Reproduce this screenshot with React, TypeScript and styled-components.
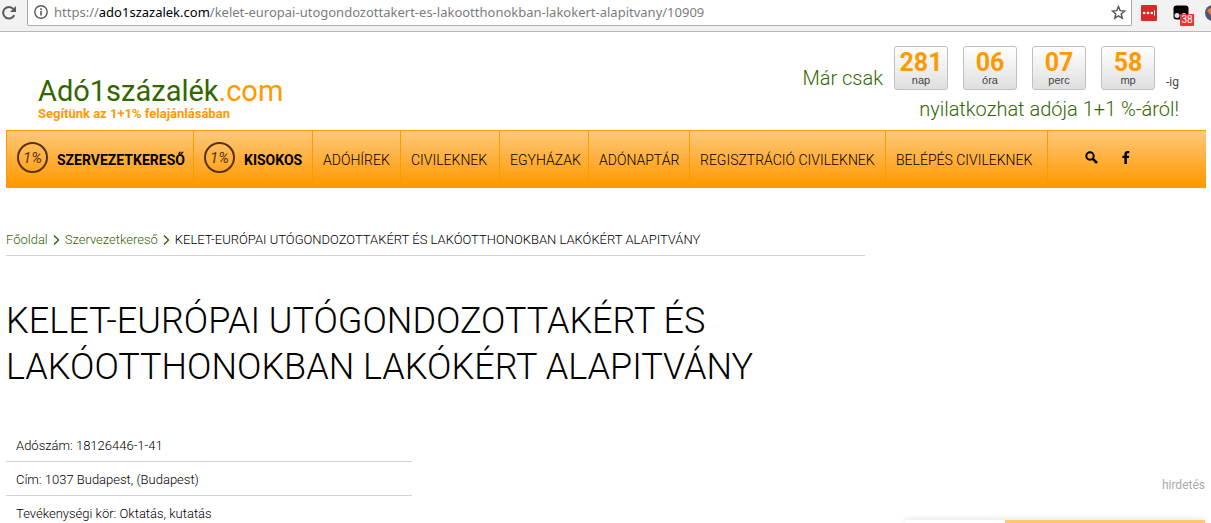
import React from "react";
import styled, { createGlobalStyle, css } from "styled-components";

const green = "#336600";
const orange = "#ff9900";

const GlobalStyle = createGlobalStyle`
  * { box-sizing: border-box; }
  body {
    margin: 0;
    background: #fff;
    color: #000;
    font-family: Roboto, "Liberation Sans", sans-serif;
    font-weight: 300;
  }
  a { color: inherit; text-decoration: none; }
`;

const BrowserBar = styled.div`
  display: flex;
  height: 32px;
  overflow: hidden;
  background: #f2f2f2;
  border-bottom: 1px solid #b8b8b8;
`;

const IconButton = styled.button`
  display: flex;
  align-items: center;
  justify-content: center;
  padding: 0;
  border: 0;
  background: none;
  color: inherit;
`;

const Reload = styled(IconButton)`
  width: 27px;
  height: 25px;
  padding-right: 9px;
`;

const Address = styled.div`
  display: flex;
  flex: 1;
  align-items: center;
  gap: 6px;
  height: 26px;
  padding: 0 5px 1px 6px;
  background: #fff;
  border: solid #a9a9a9;
  border-width: 0 1px 1px;
  border-bottom-left-radius: 2px;
  border-bottom-right-radius: 2px;
`;

const Url = styled.div`
  flex: 1;
  overflow: hidden;
  color: #7c7c7c;
  font: 400 13px/18px "Noto Sans", sans-serif;
  white-space: nowrap;
`;

const Host = styled.span`
  color: #000;
`;

const Extensions = styled.div`
  display: flex;
  flex: none;
  align-items: center;
  gap: 16px;
  width: 79px;
  height: 27px;
  padding: 0 0 2px 9px;
  overflow: hidden;
`;

const Extension = styled(IconButton)`
  position: relative;
  flex: none;
`;

const Badge = styled.span`
  position: absolute;
  left: 7px;
  top: 9px;
  width: 14px;
  height: 12px;
  border-radius: 1px;
  background: #ee3333;
  color: #fff;
  font: 400 10px/12px Roboto, sans-serif;
`;

const Frame = styled.div`
  padding: 0 5px 0 6px;
`;

const Header = styled.header`
  display: flex;
  justify-content: space-between;
  height: 98px;
  padding: 14px 27px 0 32px;
`;

const Logo = styled.a`
  display: block;
  padding-top: 28px;
  color: ${green};
  font-size: 29px;
  font-weight: 400;
  line-height: 34px;
`;

const LogoSuffix = styled.span`
  color: ${orange};
`;

const Tagline = styled.span`
  display: block;
  color: ${orange};
  font-size: 13px;
  font-weight: 700;
  line-height: 12px;
`;

const Countdown = styled.div`
  display: flex;
  flex-direction: column;
  align-items: flex-end;
  color: ${green};
  font-size: 20px;
  line-height: 24px;
`;

const Timer = styled.div`
  display: flex;
  align-items: flex-end;
  gap: 15px;
  height: 44px;
  margin-bottom: 7px;
`;

const Lead = styled.span`
  margin-right: -4px;
`;

const Unit = styled.div`
  display: flex;
  flex-direction: column;
  align-items: center;
  width: 54px;
  height: 44px;
  padding-top: 4px;
  border: 1px solid #c0c0c0;
  border-radius: 3px;
  background: linear-gradient(#fff, #dfdfdf);
  color: #444;
  font: 400 11px/12px "Liberation Sans", sans-serif;
`;

const Digits = styled.b`
  color: ${orange};
  font: 700 25px/23px Roboto, sans-serif;
`;

const Suffix = styled.span`
  margin-left: -4px;
  color: #444;
  font: 400 12px/16px Roboto, sans-serif;
`;

const Nav = styled.nav`
  display: grid;
  grid-template-columns: 187px 119px 88px 99px 89px 101px 196px 162px 1fr;
  height: 58px;
  border: solid ${orange};
  border-width: 1px 0 0 1px;
  background: linear-gradient(#ffc87a, ${orange} 95%);
`;

const NavLink = styled.a<{ $strong?: boolean }>`
  display: flex;
  align-items: center;
  gap: 9px;
  padding: 0 9px 0 10px;
  border-right: 1px solid ${orange};
  color: #000;
  font-size: 14px;
  white-space: nowrap;
  ${(p) => p.$strong && css`
    font-weight: 700;
  `}
`;

const Percent = styled.span`
  display: flex;
  flex: none;
  align-items: center;
  justify-content: center;
  width: 31px;
  height: 31px;
  margin-bottom: 4px;
  border: 2px solid #553311;
  border-radius: 50%;
  color: #553311;
  font-size: 15px;
  font-style: italic;
  font-weight: 400;
`;

const NavIcons = styled.div`
  display: flex;
  align-items: center;
  gap: 24px;
  padding: 0 0 4px 37px;
`;

const Layout = styled.div`
  display: grid;
  grid-template-columns: minmax(0, 1fr) 300px;
  gap: 40px;
  padding: 43px 6px 0;
`;

const Breadcrumb = styled.nav`
  display: flex;
  align-items: center;
  gap: 5px;
  height: 25px;
  padding-bottom: 7px;
  border-bottom: 1px solid #d3d3d3;
  color: #000;
  font-size: 13px;
  line-height: 17px;
  white-space: nowrap;
`;

const Crumb = styled.a`
  color: ${green};
`;

const Title = styled.h1`
  margin: 42px 0 38px;
  font-size: 36px;
  font-weight: 300;
  line-height: 46px;
`;

const Facts = styled.ul`
  width: 406px;
  max-width: 100%;
  margin: 0;
  padding: 0;
  list-style: none;
`;

const Fact = styled.li`
  padding: 10px 10px 7px;
  border-bottom: 1px solid #d3d3d3;
  color: #000;
  font-size: 13px;
  line-height: 16px;
  &:last-child { padding-bottom: 1px; border: 0; }
`;

const Sidebar = styled.aside`
  display: flex;
  flex-direction: column;
  justify-content: flex-end;
`;

const AdLabel = styled.span`
  margin-bottom: 27px;
  color: #aaa;
  font-size: 12px;
  font-weight: 400;
  line-height: 16px;
  text-align: right;
`;

const AdTop = styled.div`
  height: 3px;
  background: linear-gradient(90deg, #fff 100px, #ffc870 100px);
  box-shadow: 0 0 6px rgba(0, 0, 0, 0.18);
`;

const Chevron = () => (
  <svg width="7" height="10" viewBox="0 0 7 10" fill="none" stroke={green} strokeWidth="1.4">
    <path d="M1 0.5 5.5 5 1 9.5" />
  </svg>
);

const units = [["281", "nap"], ["06", "óra"], ["07", "perc"], ["58", "mp"]];

const links = [
  "ADÓHÍREK",
  "CIVILEKNEK",
  "EGYHÁZAK",
  "ADÓNAPTÁR",
  "REGISZTRÁCIÓ CIVILEKNEK",
  "BELÉPÉS CIVILEKNEK",
];

const facts = [
  "Adószám: 18126446-1-41",
  "Cím: 1037 Budapest, (Budapest)",
  "Tevékenységi kör: Oktatás, kutatás",
];

const organisation = "KELET-EURÓPAI UTÓGONDOZOTTAKÉRT ÉS LAKÓOTTHONOKBAN LAKÓKÉRT ALAPITVÁNY";

export default function App() {
  return (
    <>
      <GlobalStyle />
      <BrowserBar>
        <Reload aria-label="Reload">
          <svg width="16" height="16" viewBox="0 0 16 16" fill="none" stroke="#5a5a5a" strokeWidth="2">
            <path d="M13.2 10.2A5.8 5.8 0 1 1 12.4 4" />
            <path d="M15 1v6H9z" fill="#5a5a5a" stroke="none" />
          </svg>
        </Reload>
        <Address>
          <svg width="14" height="14" viewBox="0 0 14 14" fill="none" stroke="#5a5a5a">
            <circle cx="7" cy="7" r="6.2" strokeWidth="1.4" />
            <path d="M7 6v4.5M7 3.3v1.6" strokeWidth="1.6" />
          </svg>
          <Url role="textbox" aria-label="Address">
            https://<Host>ado1szazalek.com</Host>/kelet-europai-utogondozottakert-es-lakootthonokban-lakokert-alapitvany/10909
          </Url>
          <IconButton aria-label="Bookmark">
            <svg width="15" height="15" viewBox="0 0 15 15" fill="none" stroke="#555" strokeWidth="1.4">
              <path d="m7.5 1.5 1.7 4.2 4.5.3-3.5 2.9 1.1 4.4-3.8-2.4-3.8 2.4 1.1-4.4L1.3 6l4.5-.3z" />
            </svg>
          </IconButton>
        </Address>
        <Extensions>
          <Extension aria-label="Password manager">
            <svg width="16" height="16" viewBox="0 0 16 16">
              <rect width="16" height="16" rx="1" fill="#d32d27" />
              <circle cx="3.2" cy="8" r="1.3" fill="#fff" />
              <circle cx="7" cy="8" r="1.3" fill="#fff" />
              <circle cx="10.8" cy="8" r="1.3" fill="#fff" />
              <path d="M13.500 5.500v5" stroke="#fff" />
            </svg>
          </Extension>
          <Extension aria-label="Scripts">
            <svg width="16" height="16" viewBox="0 0 16 16">
              <rect x="0.5" y="0.5" width="15" height="14" rx="3" fill="#000" />
              <circle cx="4" cy="10.500" r="2.500" fill="#ddd" />
              <circle cx="11" cy="10.500" r="2.500" fill="#ddd" />
            </svg>
            <Badge>38</Badge>
          </Extension>
          <Extension aria-label="Extension">
            <svg width="16" height="16" viewBox="0 0 16 16">
              <circle cx="8" cy="8" r="8" fill="#4b5680" />
              <path d="M2 5.500 5 3h6l3 2.500L8 13z" fill="#f07f2e" />
              <path d="M5.500 6h5L8 10z" fill="#b33" />
            </svg>
          </Extension>
        </Extensions>
      </BrowserBar>

      <Frame>
        <Header>
          <Logo href="#">
            Adó1százalék<LogoSuffix>.com</LogoSuffix>
            <Tagline>Segítünk az 1+1% felajánlásában</Tagline>
          </Logo>
          <Countdown>
            <Timer>
              <Lead>Már csak</Lead>
              {units.map(([value, label]) => (
                <Unit key={label}>
                  <Digits>{value}</Digits>
                  {label}
                </Unit>
              ))}
              <Suffix>-ig</Suffix>
            </Timer>
            <span>nyilatkozhat adója 1+1 %-áról!</span>
          </Countdown>
        </Header>

        <Nav>
          <NavLink href="#" $strong><Percent>1%</Percent>SZERVEZETKERESŐ</NavLink>
          <NavLink href="#" $strong><Percent>1%</Percent>KISOKOS</NavLink>
          {links.map((text) => (
            <NavLink href="#" key={text}>{text}</NavLink>
          ))}
          <NavIcons>
            <IconButton aria-label="Keresés">
              <svg width="13" height="13" viewBox="0 0 13 13" fill="none" stroke="#000">
                <circle cx="5" cy="5" r="3.7" strokeWidth="2" />
                <path d="m7.8 7.8 4.2 4.2" strokeWidth="2.6" />
              </svg>
            </IconButton>
            <IconButton aria-label="Facebook">
              <svg width="8" height="13" viewBox="0 0 8 13">
                <path d="M7.3.1v2.100H6c-.9 0-1.100.4-1.100 1.100v1.400h2.300L6.900 7h-2v6H2.400V7h-2V4.700h2V3c0-2 1.200-3 3-3z" />
              </svg>
            </IconButton>
          </NavIcons>
        </Nav>
      </Frame>

      <Layout>
        <main>
          <Breadcrumb>
            <Crumb href="#">Főoldal</Crumb>
            <Chevron />
            <Crumb href="#">Szervezetkereső</Crumb>
            <Chevron />
            <span>{organisation}</span>
          </Breadcrumb>
          <Title>{organisation}</Title>
          <Facts>
            {facts.map((text) => <Fact key={text}>{text}</Fact>)}
          </Facts>
        </main>
        <Sidebar>
          <AdLabel>hirdetés</AdLabel>
          <AdTop />
        </Sidebar>
      </Layout>
    </>
  );
}
